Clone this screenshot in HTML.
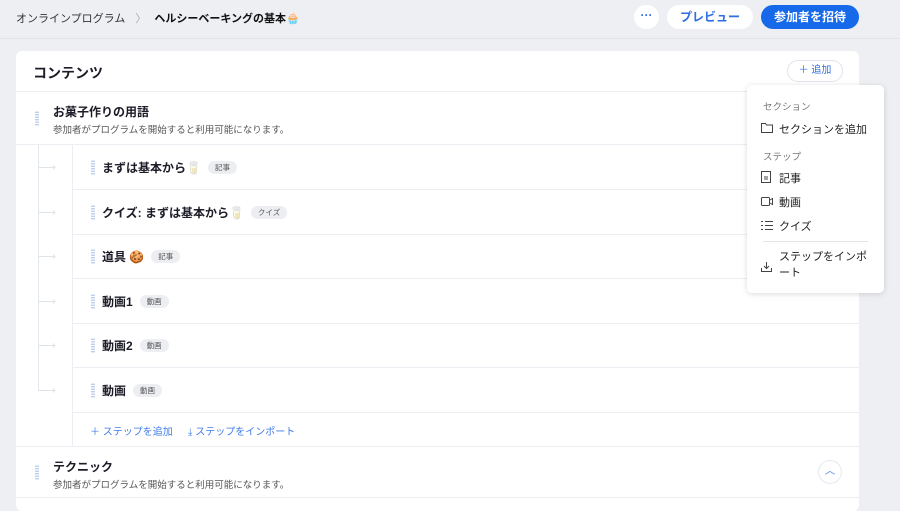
<!DOCTYPE html>
<html><head><meta charset="utf-8"><style>
*{box-sizing:border-box;margin:0;padding:0}
body{width:900px;height:504px;overflow:hidden;background:#eeeff3;font-family:"Liberation Sans","Noto Sans CJK JP",sans-serif;color:#1c1c28;position:relative}
.top{position:absolute;left:0;top:0;width:900px;height:39px;border-bottom:1px solid #e2e4ea}
.bc{position:absolute;left:16px;top:10px;font-size:11px;color:#333;white-space:nowrap}
.bc b{font-weight:bold;color:#111}
.bc i{font-style:normal;color:#aaa;margin:0 8px 0 10px}
.btn{position:absolute;top:5px;height:24px;border-radius:12px;background:#fff;font-size:12px;color:#2f6de0;font-weight:bold;text-align:center;line-height:24px}
.card{position:absolute;left:16px;top:51px;width:843px;height:460px;background:#fff;border-radius:6px;overflow:hidden}
.row{position:absolute;left:0;width:843px;border-bottom:1px solid #eceef3}
.drag{position:absolute;width:4px;height:15px;background-image:radial-gradient(circle,#b6c8ea 0.8px,transparent 1px);background-size:2px 2.5px}
.tag{display:inline-block;font-size:7.5px;color:#555;background:#eceef2;border-radius:7px;padding:0 7px;height:13px;line-height:13px;vertical-align:2px;margin-left:7px;font-weight:normal}
.st{font-size:12px;font-weight:bold;position:absolute;left:86px}
.menu{position:absolute;left:747px;top:85px;width:137px;height:208px;background:#fff;border-radius:5px;box-shadow:0 1px 6px rgba(0,0,0,.15);font-size:11px;color:#222}
.menu div{position:absolute;left:32px}
.menu .h{left:16px;font-size:9.5px;color:#777}
.menu svg{position:absolute;left:14px}
</style></head><body>
<div class="top">
<div class="bc">オンラインプログラム<i>〉</i><b>ヘルシーベーキングの基本🧁</b></div>
<div class="btn" style="left:634px;width:25px;color:#2f6de0;line-height:20px">···</div>
<div class="btn" style="left:667px;width:86px">プレビュー</div>
<div class="btn" style="left:761px;width:98px;background:#166aea;color:#fff">参加者を招待</div>
</div>
<div class="card">
<div class="row" style="top:0;height:41px"><span style="position:absolute;left:17px;top:12px;font-size:14px;font-weight:bold">コンテンツ</span>
<span style="position:absolute;left:771px;top:9px;width:56px;height:22px;border:1px solid #e0e4ee;border-radius:11px;font-size:10px;color:#2f6de0;text-align:center;line-height:20px">＋ 追加</span></div>
<div class="row" style="top:41px;height:53px"><div class="drag" style="left:19px;top:19px"></div>
<span style="position:absolute;left:37px;top:11px;font-size:12px;font-weight:bold">お菓子作りの用語</span>
<span style="position:absolute;left:37px;top:30px;font-size:9.5px;color:#555">参加者がプログラムを開始すると利用可能になります。</span></div>
<div style="position:absolute;left:22px;top:94px;width:1px;height:246px;background:#e3e6ec"></div>
<div style="position:absolute;left:56px;top:94px;width:1px;height:301px;background:#eceef3"></div>
<div id="steps"></div>
<div class="row" style="left:57px;top:361px;height:34px;border:none;font-size:10px;color:#3f7be6">
<span style="position:absolute;left:17px;top:11px">＋ ステップを追加</span><span style="position:absolute;left:115px;top:11px">⤓ ステップをインポート</span></div>
<div class="row" style="top:395px;height:52px;border-top:1px solid #eceef3"><div class="drag" style="left:19px;top:18px"></div>
<span style="position:absolute;left:37px;top:11px;font-size:12px;font-weight:bold">テクニック</span>
<span style="position:absolute;left:37px;top:30px;font-size:9.5px;color:#555">参加者がプログラムを開始すると利用可能になります。</span>
<span style="position:absolute;left:802px;top:13px;width:24px;height:24px;border:1px solid #e3e8f2;border-radius:50%;color:#3f7be6;text-align:center;font-size:10px;line-height:22px">︿</span></div>
</div>
<div class="menu">
<div class="h" style="top:14px">セクション</div>
<svg style="top:37px" width="12" height="11" viewBox="0 0 12 11"><path d="M.5 1.5h4l1 1.5h6v7.5H.5z" fill="none" stroke="#444"/></svg>
<div style="top:36px">セクションを追加</div>
<div class="h" style="top:64px">ステップ</div>
<svg style="top:86px" width="10" height="12" viewBox="0 0 10 12"><rect x=".5" y=".5" width="9" height="11" fill="none" stroke="#444"/><path d="M3 6h4M3 8h4" stroke="#444"/></svg>
<div style="top:85px">記事</div>
<svg style="top:112px" width="12" height="9" viewBox="0 0 12 9"><rect x=".5" y=".5" width="8" height="8" rx="1" fill="none" stroke="#444"/><path d="M9 3l2.5-1.5v6L9 6" fill="none" stroke="#444"/></svg>
<div style="top:109px">動画</div>
<svg style="top:135px" width="12" height="11" viewBox="0 0 12 11"><path d="M0 1.5h2M4 1.5h8M0 5.5h2M4 5.5h8M0 9.5h2M4 9.5h8" stroke="#444"/></svg>
<div style="top:133px">クイズ</div>
<div style="left:16px;top:156px;width:105px;height:1px;background:#e3e5ea"></div>
<svg style="top:177px" width="11" height="10" viewBox="0 0 11 10"><path d="M5.5 0v6M3 4l2.5 2.5L8 4M.5 6v3.5h10V6" fill="none" stroke="#444"/></svg>
<div style="top:164px;line-height:16px;width:95px">ステップをインポート</div>
</div>
<script>
var s=[["まずは基本から🥛","記事"],["クイズ: まずは基本から🥛","クイズ"],["道具 🍪","記事"],["動画1","動画"],["動画2","動画"],["動画","動画"]],h="";
s.forEach(function(a,i){var t=94+i*44.5;h+='<div class="row" style="left:57px;top:'+t+'px;height:45px"><div class="drag" style="left:18px;top:15px"></div><span class="st" style="left:29px;top:14px">'+a[0]+'<span class="tag">'+a[1]+'</span></span></div><svg style="position:absolute;left:23px;top:'+(t+19)+'px" width="18" height="7" viewBox="0 0 18 7"><path d="M0 3.5h16M14 1.5l2 2-2 2" fill="none" stroke="#dfe3ea"/></svg>';});
document.getElementById("steps").outerHTML=h;
</script>
</body></html>
